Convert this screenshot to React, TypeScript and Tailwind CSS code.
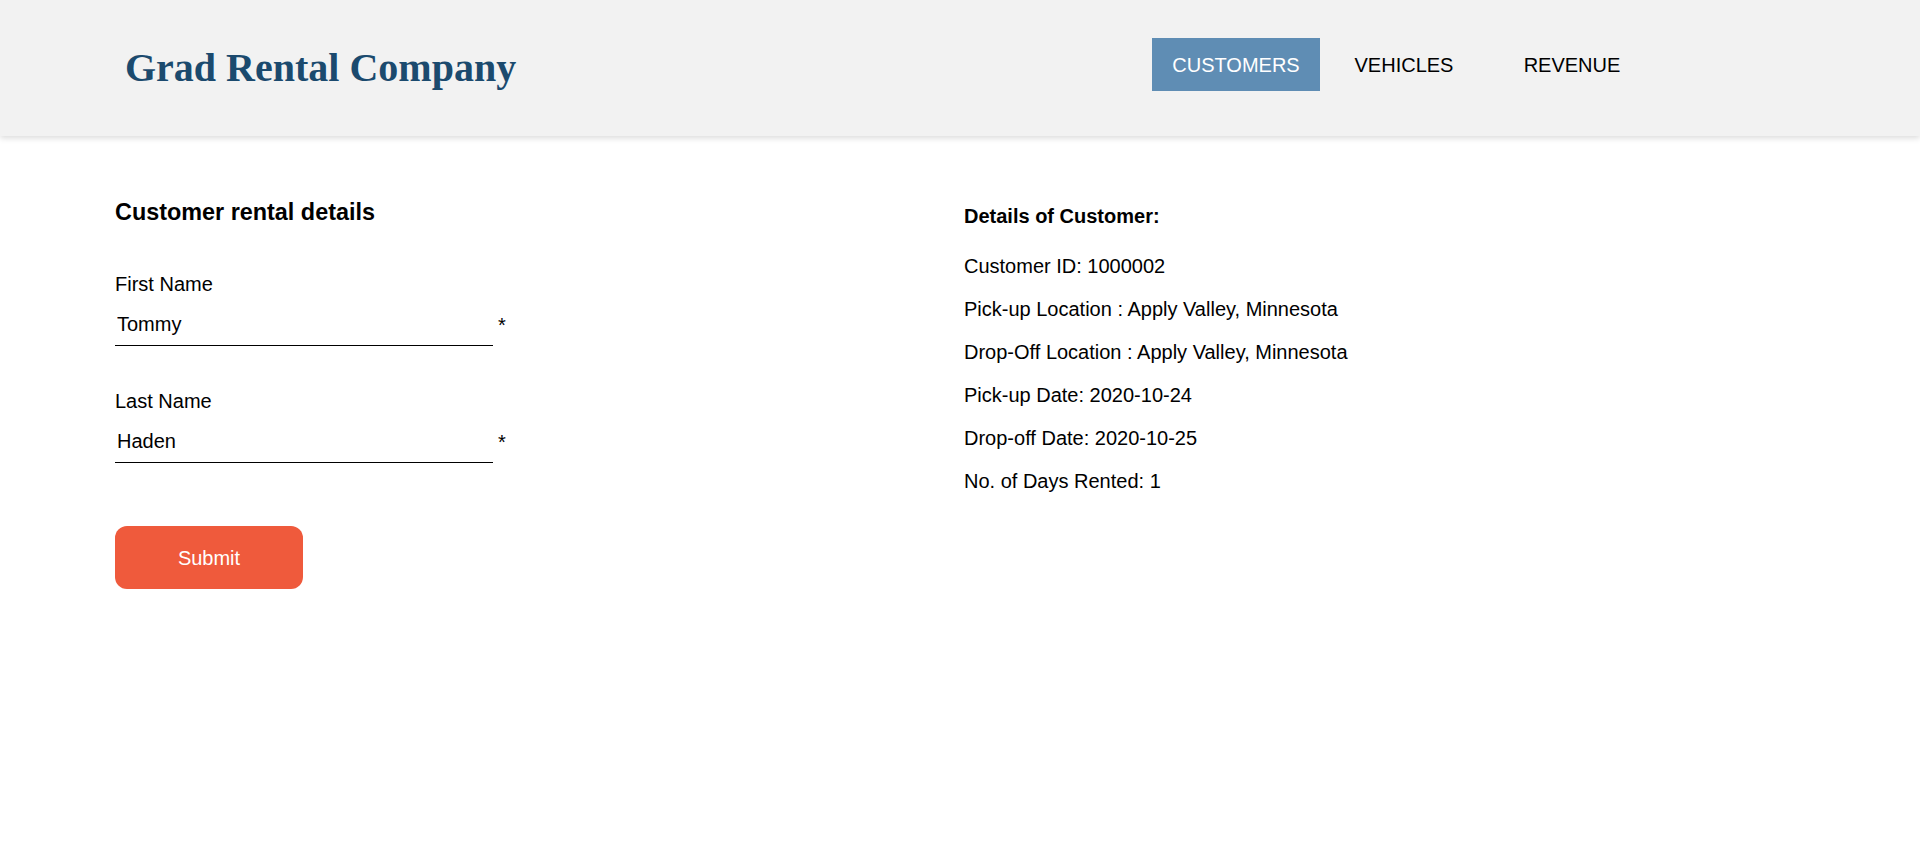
import React from "react";

const rows = [
  "Customer ID: 1000002",
  "Pick-up Location : Apply Valley, Minnesota",
  "Drop-Off Location : Apply Valley, Minnesota",
  "Pick-up Date: 2020-10-24",
  "Drop-off Date: 2020-10-25",
  "No. of Days Rented: 1",
];

function Field({ label, value }: { label: string; value: string }) {
  return (
    <div className="flex flex-col">
      <label className="text-[20px] leading-[23px] text-black">{label}</label>
      <div className="mt-[8px] flex items-center">
        <input
          defaultValue={value}
          className="w-[378px] h-[42px] border-b border-black bg-transparent px-[2px] text-[20px] text-black outline-none"
          style={{ fontFamily: '"Liberation Sans", Arial, sans-serif' }}
        />
        <span className="ml-[5px] text-[20px] leading-[23px] text-black">*</span>
      </div>
    </div>
  );
}

export default function App() {
  return (
    <div
      className="min-h-screen w-full bg-white text-black"
      style={{ fontFamily: '"Liberation Sans", Arial, sans-serif' }}
    >
      <header className="flex h-[136px] items-start justify-between bg-[#f2f2f2] pl-[125px] pr-[264px] shadow-[0_2px_6px_rgba(0,0,0,0.15)]">
        <h1
          className="self-center text-[40px] font-bold leading-[46px] text-[#1b4a6e]"
          style={{ fontFamily: '"Liberation Serif", "Times New Roman", serif' }}
        >
          Grad Rental Company
        </h1>
        <nav className="mt-[38px] flex">
          <a className="flex h-[53px] w-[168px] items-center justify-center bg-[#5f8db4] text-[20px] text-white">
            CUSTOMERS
          </a>
          <a className="flex h-[53px] w-[168px] items-center justify-center text-[20px] text-black">
            VEHICLES
          </a>
          <a className="flex h-[53px] w-[168px] items-center justify-center text-[20px] text-black">
            REVENUE
          </a>
        </nav>
      </header>

      <main className="flex pl-[115px]">
        <section className="w-[849px] pt-[63px]">
          <h3 className="text-[23.4px] font-bold leading-[27px]">Customer rental details</h3>
          <div className="mt-[47px] flex flex-col gap-[44px]">
            <Field label="First Name" value="Tommy" />
            <Field label="Last Name" value="Haden" />
          </div>
          <button className="mt-[63px] h-[63px] w-[188px] rounded-[12px] bg-[#ef5a3c] text-[20px] text-white">
            Submit
          </button>
        </section>
        <section className="pt-[69px]">
          <h4 className="text-[20px] font-bold leading-[23px]">Details of Customer:</h4>
          <div className="mt-[27px] flex flex-col gap-[20px]">
            {rows.map((r) => (
              <p key={r} className="text-[20px] leading-[23px]">
                {r}
              </p>
            ))}
          </div>
        </section>
      </main>
    </div>
  );
}
